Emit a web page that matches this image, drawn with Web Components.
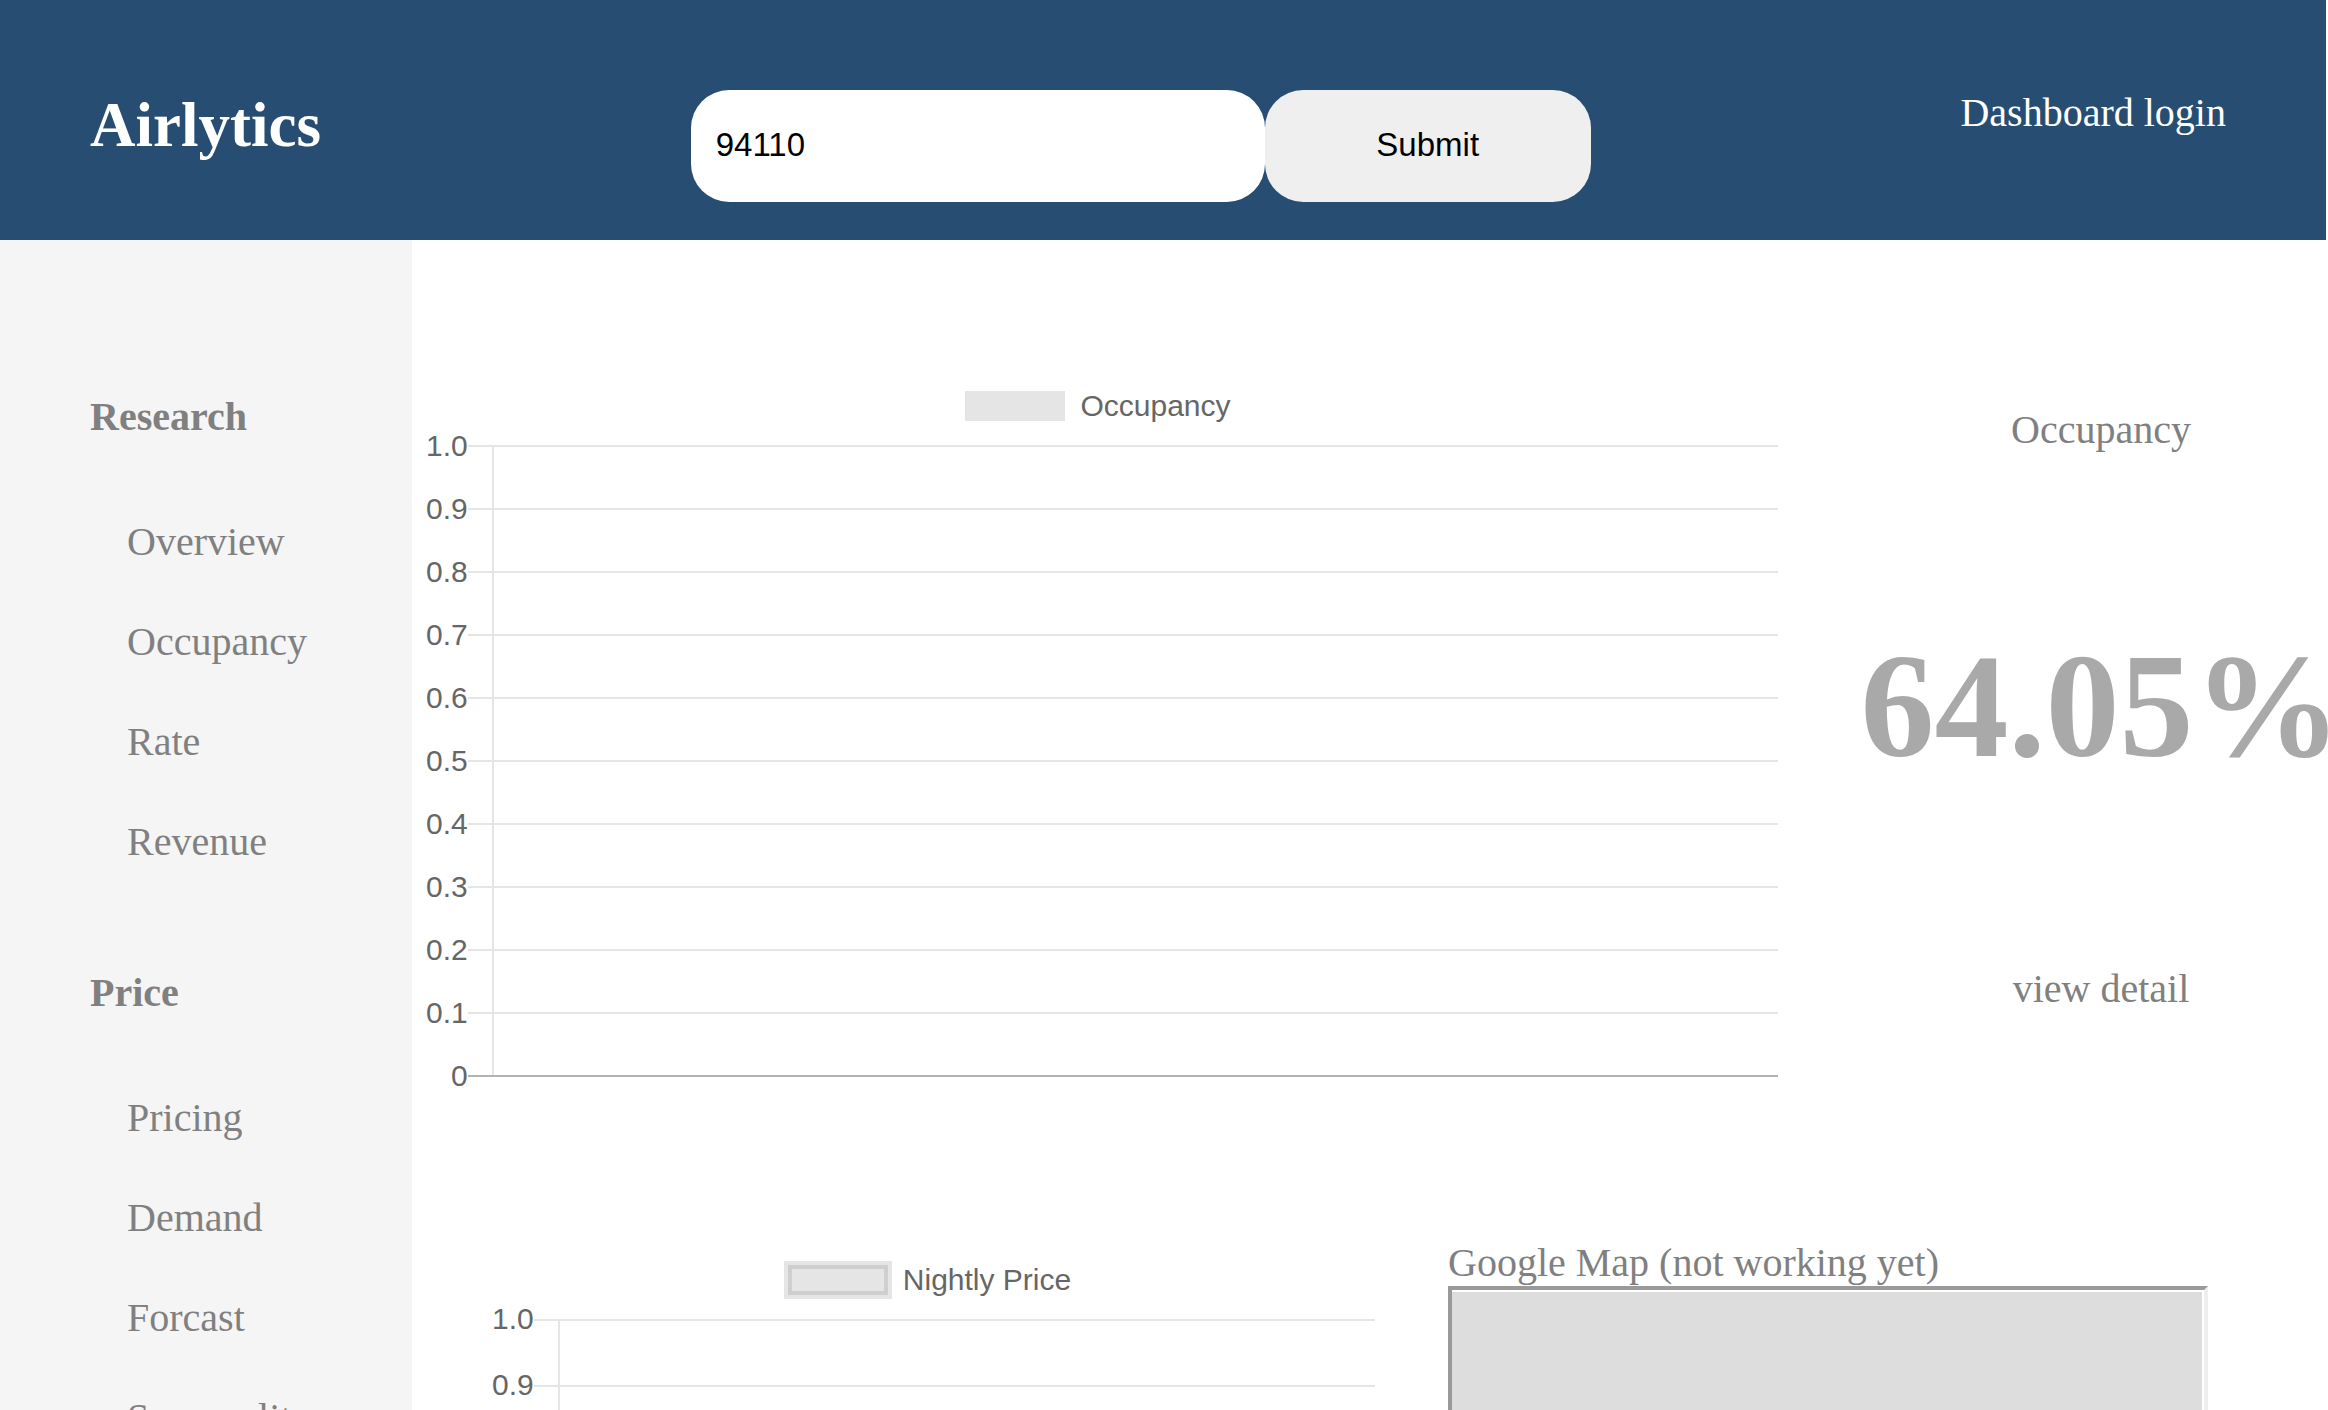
<!DOCTYPE html>
<html lang="en">
<head>
<meta charset="utf-8">
<title>Airlytics</title>
<style>
  html, body { margin: 0; height: 100%; }
  body {
    font: 40px/46px "Liberation Serif", "Times New Roman", serif;
    color: #808080;
    background: #fff;
    overflow: hidden;
  }
</style>
</head>
<body>
<airlytics-app></airlytics-app>

<script>
class Base extends HTMLElement {
  constructor() {
    super();
    this.attachShadow({ mode: "open" });
  }
  connectedCallback() { this.shadowRoot.innerHTML = this.render(); }
}

customElements.define("site-header", class extends Base {
  render() {
    return `
      <style>
        :host {
          display: flex;
          justify-content: space-between;
          align-items: flex-start;
          height: 240px;
          box-sizing: border-box;
          margin-right: 2px;
          padding: 90px 100px 0 90px;
          background: #274e72;
          color: #fff;
        }
        h1 { margin: 0; font-size: 63px; line-height: 70px; }
        form { display: flex; margin: 0; }
        input, button {
          box-sizing: border-box;
          height: 112px;
          margin: 0;
          border: 0;
          border-radius: 38px;
          font: 33px "Liberation Sans", Arial, sans-serif;
          color: #000;
        }
        input { width: 574px; padding: 0 25px 2px; background: #fff; }
        button { width: 326px; padding: 0 0 2px; background: #efefef; }
        a { color: inherit; text-decoration: none; }
      </style>
      <h1>Airlytics</h1>
      <form onsubmit="return false">
        <input type="text" value="94110" aria-label="Zip code">
        <button type="submit">Submit</button>
      </form>
      <a href="#login">Dashboard login</a>`;
  }
});

customElements.define("nav-group", class extends Base {
  render() {
    const links = this.getAttribute("items").split(",")
      .map(t => `<li><a href="#${t.toLowerCase()}">${t}</a></li>`).join("");
    return `
      <style>
        :host { display: block; }
        h2 { margin: 0; font-size: 40px; line-height: 46px; }
        ul { list-style: none; margin: 0; padding: 52px 0 0 37px; }
        li { height: 100px; padding-top: 27px; box-sizing: border-box; }
        a { color: inherit; text-decoration: none; }
      </style>
      <h2>${this.getAttribute("heading")}</h2>
      <ul>${links}</ul>`;
  }
});

customElements.define("side-nav", class extends Base {
  render() {
    return `
      <style>
        :host {
          display: flex;
          flex-direction: column;
          gap: 78px;
          box-sizing: border-box;
          padding: 154px 0 0 90px;
          background: #f5f5f5;
        }
      </style>
      <nav-group heading="Research" items="Overview,Occupancy,Rate,Revenue"></nav-group>
      <nav-group heading="Price" items="Pricing,Demand,Forcast,Seasonality"></nav-group>`;
  }
});

customElements.define("bar-chart", class extends Base {
  render() {
    const ticks = ["1.0", "0.9", "0.8", "0.7", "0.6", "0.5", "0.4", "0.3", "0.2", "0.1", "0"];
    const labels = ticks.map(t => `<span>${t}</span>`).join("");
    const rows = ticks.map(() => `<i></i>`).join("");
    return `
      <style>
        :host {
          --step: 63px;
          --half: 31px;
          display: block;
          font: 30px/34px "Liberation Sans", Helvetica, sans-serif;
          color: #666;
        }
        .legend {
          display: flex;
          justify-content: center;
          align-items: center;
          gap: 15px;
          height: 34px;
          padding-right: 8px;
        }
        .swatch { width: 100px; height: 30px; background: #e5e5e5; }
        :host([outlined]) .swatch {
          border: 4px solid #cfcfcf;
          outline: 4px solid #e5e5e5;
          box-sizing: border-box;
        }
        .plot { display: flex; margin-top: calc(22px - var(--half)); }
        .labels { display: flex; flex-direction: column; text-align: right; }
        .labels span { height: var(--step); line-height: var(--step); }
        .ticks, .grid { padding-top: var(--half); }
        .ticks { width: 24px; }
        .grid { flex: 1; }
        i {
          display: block;
          height: var(--step);
          box-sizing: border-box;
          border-top: 2px solid #e5e5e5;
        }
        .grid i { border-left: 2px solid #e5e5e5; }
        i:last-child { height: 2px; border-left: 0; border-color: #b2b2b2; }
      </style>
      <div class="legend"><span class="swatch"></span><span>${this.getAttribute("label")}</span></div>
      <div class="plot">
        <div class="labels">${labels}</div>
        <div class="ticks">${rows}</div>
        <div class="grid">${rows}</div>
      </div>`;
  }
});

customElements.define("stat-panel", class extends Base {
  render() {
    return `
      <style>
        :host { display: flex; flex-direction: column; align-items: center; white-space: nowrap; }
        strong { font-size: 148px; line-height: 170px; color: #a9a9a9; margin: 168px 0 175px; }
        a { color: inherit; text-decoration: none; }
      </style>
      <span>${this.getAttribute("label")}</span>
      <strong>${this.getAttribute("value")}</strong>
      <a href="#detail">view detail</a>`;
  }
});

customElements.define("map-panel", class extends Base {
  render() {
    return `
      <style>
        :host { display: block; }
        .frame {
          height: 750px;
          box-sizing: border-box;
          border: 4px solid;
          border-color: #9a9a9a #eee #eee #9a9a9a;
          padding: 2px 2px 2px 0;
        }
        .map { height: 100%; background: #ddd; }
      </style>
      <div><slot></slot></div>
      <div class="frame"><div class="map"></div></div>`;
  }
});

customElements.define("airlytics-app", class extends Base {
  render() {
    return `
      <style>
        :host { display: grid; grid-template: auto 1fr / 412px 1fr; height: 100vh; overflow: hidden; }
        site-header { grid-column: 1 / -1; }
        side-nav, main { min-height: 0; overflow: hidden; }
        .row { display: flex; align-items: flex-start; }
        .top { padding: 149px 0 0 14px; gap: 96px; height: 870px; box-sizing: border-box; }
        .top bar-chart { flex: 1; min-width: 0; }
        stat-panel { width: 454px; padding-top: 18px; }
        .bottom { padding: 130px 120px 0 80px; gap: 73px; }
        .bottom bar-chart { --step: 66px; --half: 33px; flex: 1; padding-top: 23px; }
        map-panel { width: 760px; }
      </style>
      <site-header></site-header>
      <side-nav></side-nav>
      <main>
        <div class="row top">
          <bar-chart label="Occupancy"></bar-chart>
          <stat-panel label="Occupancy" value="64.05%"></stat-panel>
        </div>
        <div class="row bottom">
          <bar-chart outlined label="Nightly Price"></bar-chart>
          <map-panel>Google Map (not working yet)</map-panel>
        </div>
      </main>`;
  }
});
</script>
</body>
</html>
